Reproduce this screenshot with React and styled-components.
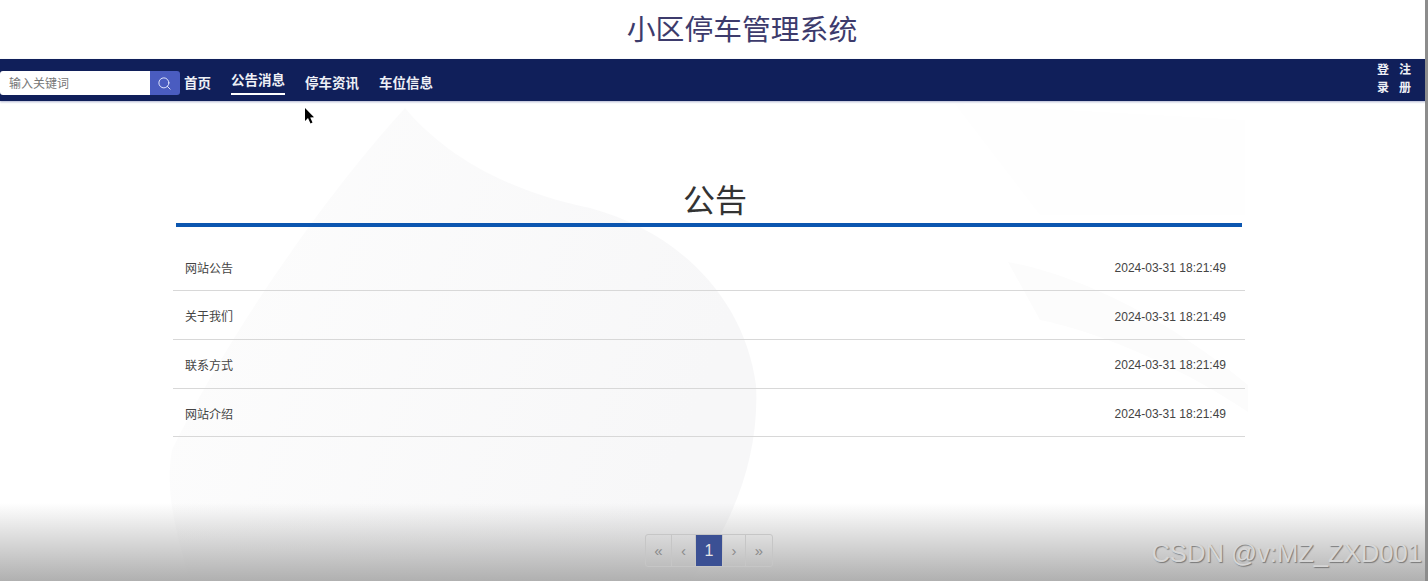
import React from "react";
import styled, { createGlobalStyle } from "styled-components";
import { Search } from "lucide-react";

const CJK = `"Liberation Sans", "Noto Sans CJK SC", sans-serif`;

const GlobalStyle = createGlobalStyle`
  html, body {
    margin: 0;
    padding: 0;
    height: 100%;
    overflow: hidden;
    background: #fff;
    font-family: ${CJK};
  }
`;

const navItems = [
  { id: "home", label: "首页" },
  { id: "notice", label: "公告消息", active: true },
  { id: "news", label: "停车资讯" },
  { id: "spot", label: "车位信息" }
];

const notices = ["网站公告", "关于我们", "联系方式", "网站介绍"];

const App = () => {
  return (
    <Page>
      <GlobalStyle />
      <Backdrop viewBox="0 0 1428 581" aria-hidden="true">
        <defs>
          <linearGradient id="blob" x1="0" y1="0" x2="1" y2="0.3">
            <stop offset="0" stopColor="#fdfdfd" />
            <stop offset="1" stopColor="#f7f7f8" />
          </linearGradient>
        </defs>
        <path
          d="M405 108 C440 150 500 190 590 208 C680 232 745 300 756 385 C760 460 730 530 690 581 L190 581 C175 530 165 490 172 450 C230 330 330 190 405 108 Z"
          fill="url(#blob)"
        />
        <path
          d="M1008 262 C1080 275 1170 320 1248 385 L1248 412 C1170 360 1090 330 1040 320 Z"
          fill="#fcfcfc"
        />
        <path d="M955 104 L1245 120 L1245 215 L1040 215 Z" fill="#fefefe" />
      </Backdrop>

      <SiteTitle>小区停车管理系统</SiteTitle>

      <NavBar>
        <SearchBox>
          <SearchInput placeholder="输入关键词" />
          <SearchButton type="button">
            <Search size={15} strokeWidth={1.5} />
          </SearchButton>
        </SearchBox>
        <NavList>
          {navItems.map(item => (
            <NavLink key={item.id} $active={item.active}>
              {item.label}
            </NavLink>
          ))}
        </NavList>
        <AuthLinks>
          <AuthLink>登录</AuthLink>
          <AuthLink>注册</AuthLink>
        </AuthLinks>
      </NavBar>

      <Main>
        <Heading>公告</Heading>
        <NoticeList>
          {notices.map(name => (
            <NoticeRow key={name}>
              <NoticeName>{name}</NoticeName>
              <span>2024-03-31 18:21:49</span>
            </NoticeRow>
          ))}
        </NoticeList>
      </Main>

      <BottomShade />

      <Pagination>
        <PageCell $width={26}>«</PageCell>
        <PageCell $width={24}>‹</PageCell>
        <PageCell $width={27} $active>
          1
        </PageCell>
        <PageCell $width={23}>›</PageCell>
        <PageCell $width={26}>»</PageCell>
      </Pagination>

      <Watermark>CSDN @v:MZ_ZXD001</Watermark>

      <Pointer viewBox="0 0 12 18" aria-hidden="true">
        <path d="M1 1 L1 14 L4 11 L6.5 16.5 L8.5 15.5 L6.2 10.4 L10 10.2 Z" fill="#000" />
      </Pointer>

      <ScrollEdge />
    </Page>
  );
};

const Page = styled.div`
  position: relative;
  width: 1428px;
  height: 581px;
  overflow: hidden;
  background: #fff;
`;

const Backdrop = styled.svg`
  position: absolute;
  inset: 0;
  width: 1428px;
  height: 581px;
`;

const SiteTitle = styled.h1`
  position: relative;
  margin: 0;
  height: 59px;
  padding-left: 56px;
  line-height: 61px;
  text-align: center;
  font-size: 28.8px;
  font-weight: 400;
  color: #3d3b6c;
`;

const NavBar = styled.nav`
  position: relative;
  display: flex;
  align-items: flex-start;
  height: 42px;
  background: #101f5a;
  box-shadow: 0 1px 2px rgba(60, 70, 140, 0.4);
`;

const SearchBox = styled.div`
  display: flex;
  width: 180px;
  height: 24px;
  margin-top: 12px;
  flex-shrink: 0;
`;

const SearchInput = styled.input`
  box-sizing: border-box;
  width: 150px;
  height: 24px;
  border: none;
  border-radius: 3px 0 0 3px;
  padding: 1px 9px 0;
  outline: none;
  background: #fff;
  font-family: ${CJK};
  font-size: 12px;

  &::placeholder {
    color: #777;
    opacity: 1;
  }
`;

const SearchButton = styled.button`
  display: flex;
  align-items: center;
  justify-content: center;
  width: 30px;
  height: 24px;
  padding: 0 1px 0 0;
  border: none;
  border-radius: 0 3px 3px 0;
  background: #4a5cc0;
  color: #e8ecff;
`;

const NavList = styled.div`
  display: flex;
  gap: 20px;
  margin-left: 4px;
`;

const NavLink = styled.a`
  box-sizing: border-box;
  margin-top: ${p => (p.$active ? "12px" : "15px")};
  padding-bottom: ${p => (p.$active ? "2px" : "0")};
  border-bottom: ${p => (p.$active ? "2px solid #fff" : "none")};
  line-height: 20px;
  font-size: 13.5px;
  font-weight: 700;
  color: #eef0f6;
`;

const AuthLinks = styled.div`
  display: flex;
  gap: 8px;
  margin-left: auto;
  margin-right: 16px;
  padding-top: 2px;
`;

const AuthLink = styled.a`
  width: 14px;
  font-size: 12px;
  line-height: 18px;
  font-weight: 700;
  text-align: center;
  color: #eef0f6;
  word-break: break-all;
`;

const Main = styled.main`
  position: relative;
  width: 1072px;
  margin-left: 173px;
`;

const Heading = styled.h2`
  box-sizing: border-box;
  margin: 0 3px;
  height: 126px;
  padding: 79px 0 0 12px;
  border-bottom: 4px solid #0c56b0;
  text-align: center;
  font-size: 32px;
  line-height: 42px;
  font-weight: 400;
  color: #333;
`;

const NoticeList = styled.div`
  margin-top: 15.5px;
`;

const NoticeRow = styled.div`
  box-sizing: border-box;
  display: flex;
  align-items: center;
  justify-content: space-between;
  height: 48.7px;
  padding: 3.5px 19px 0 12px;
  border-bottom: 1px solid #d8d8d8;
  font-size: 12px;
  color: #444;
`;

const NoticeName = styled.span`
  margin-top: -2px;
`;

const BottomShade = styled.div`
  position: absolute;
  left: 0;
  right: 0;
  bottom: 0;
  height: 78px;
  background: linear-gradient(to bottom, rgba(176, 176, 176, 0), rgba(176, 176, 176, 1));
`;

const Pagination = styled.div`
  position: absolute;
  left: 645px;
  top: 534px;
  display: flex;
  height: 31px;
  border: 1px solid #c6c6c6;
  border-radius: 3px;
`;

const PageCell = styled.span`
  box-sizing: border-box;
  display: flex;
  align-items: center;
  justify-content: center;
  width: ${p => p.$width}px;
  border-right: 1px solid #c6c6c6;
  background: ${p => (p.$active ? "#3b5094" : "transparent")};
  color: ${p => (p.$active ? "#e6e6e6" : "#8a8a8a")};
  font-size: ${p => (p.$active ? "16px" : "15px")};

  &:last-child {
    border-right: none;
  }
`;

const Watermark = styled.div`
  position: absolute;
  right: 6px;
  top: 538px;
  font-family: "Liberation Sans", sans-serif;
  font-size: 25.6px;
  line-height: 30px;
  white-space: nowrap;
  color: #d6d6d6;
  text-shadow: 1px 1px 1px rgba(90, 90, 90, 0.7);
`;

const Pointer = styled.svg`
  position: absolute;
  left: 304px;
  top: 107px;
  width: 12px;
  height: 18px;
`;

const ScrollEdge = styled.div`
  position: absolute;
  top: 0;
  right: 0;
  width: 3px;
  height: 581px;
  background: #8c8c8c;
`;

export default App;
